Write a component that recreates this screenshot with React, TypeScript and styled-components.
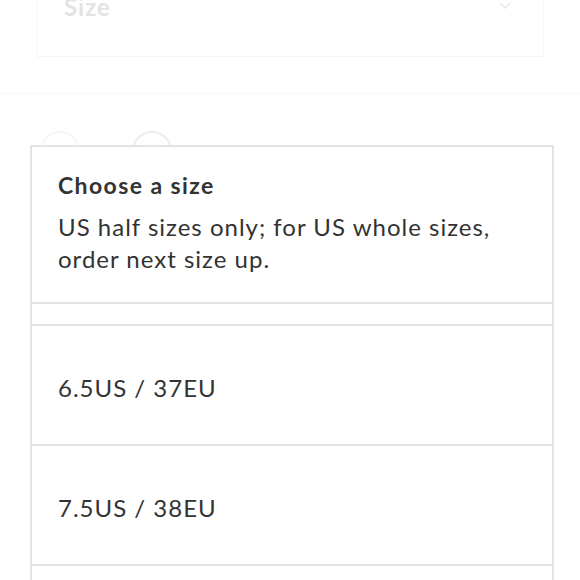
import React from "react";
import styled, { createGlobalStyle } from "styled-components";

const GlobalStyle = createGlobalStyle`
  html, body {
    margin: 0;
    padding: 0;
    background: #fff;
    font-family: Lato, "Open Sans", sans-serif;
    color: #333;
  }
`;

const Screen = styled.div`
  position: relative;
  width: 580px;
  height: 580px;
  overflow: hidden;
  background: #fff;
`;

/* page behind the sheet */
const Page = styled.div`
  display: flex;
  flex-direction: column;
`;

const SizeSelect = styled.div`
  margin: -40px 36px 0 36px;
  height: 97px;
  border: 1px solid #f1f1f1;
  display: flex;
  align-items: flex-start;
  justify-content: space-between;
  padding: 28px 28px 0 27px;
  box-sizing: border-box;
`;

const SizeLabel = styled.span`
  margin-top: 4px;
  font-size: 24px;
  font-weight: 700;
  letter-spacing: 1px;
  color: #d4d4d4;
  line-height: 28px;
`;

const Chevron = styled.svg`
  width: 20px;
  height: 12px;
  margin-top: 14px;
`;

const Divider = styled.div`
  margin-top: 36px;
  height: 1px;
  background: #f4f4f4;
`;

const QtyRow = styled.div`
  display: flex;
  gap: 52px;
  padding: 37px 0 0 40px;
`;

const QtyButton = styled.div<{ $tone: string }>`
  width: 40px;
  height: 40px;
  border: 2px solid ${(p) => p.$tone};
  border-radius: 50%;
  box-sizing: border-box;
  display: flex;
  align-items: center;
  justify-content: center;
`;

const PlusBar = styled.div`
  width: 2px;
  height: 16px;
  background: #e2e2e2;
`;

const Veil = styled.div`
  position: absolute;
  inset: 0;
  background: rgba(255, 255, 255, 0.35);
`;

/* the size sheet */
const Sheet = styled.div`
  position: absolute;
  top: 145px;
  left: 30px;
  width: 524px;
  border: 2px solid #e3e3e3;
  border-bottom: none;
  background: #fff;
  box-sizing: border-box;
`;

const SheetHeader = styled.div`
  padding: 24px 26px 27px 26px;
  border-bottom: 2px solid #e3e3e3;
`;

const Title = styled.h2`
  margin: 0 0 12px 0;
  font-size: 23px;
  font-weight: 700;
  letter-spacing: 1.4px;
  line-height: 28px;
  color: #333;
`;

const Note = styled.p`
  margin: 0;
  font-size: 24px;
  letter-spacing: 1px;
  line-height: 32px;
  color: #333;
`;

const Spacer = styled.div`
  height: 20px;
  border-bottom: 2px solid #e3e3e3;
`;

const Option = styled.div`
  height: 118px;
  border-bottom: 2px solid #e3e3e3;
  display: flex;
  align-items: center;
  padding: 5px 26px 0 26px;
  box-sizing: border-box;
  height: 120px;
  font-size: 24px;
  letter-spacing: 1px;
  color: #333;
`;

const sizes = ["6.5US / 37EU", "7.5US / 38EU", "8.5US / 39EU"];

export default function App() {
  return (
    <Screen>
      <GlobalStyle />
      <Page>
        <SizeSelect>
          <SizeLabel>Size</SizeLabel>
          <Chevron viewBox="0 0 20 12">
            <path d="M1 -4 L10 5 L19 -4" fill="none" stroke="#dcdcdc" strokeWidth="1.5" />
          </Chevron>
        </SizeSelect>
        <Divider />
        <QtyRow>
          <QtyButton $tone="#f2f2f2" />
          <QtyButton $tone="#e4e4e4">
            <PlusBar />
          </QtyButton>
        </QtyRow>
      </Page>
      <Veil />
      <Sheet>
        <SheetHeader>
          <Title>Choose a size</Title>
          <Note>US half sizes only; for US whole sizes, order next size up.</Note>
        </SheetHeader>
        <Spacer />
        {sizes.map((s) => (
          <Option key={s}>{s}</Option>
        ))}
      </Sheet>
    </Screen>
  );
}
